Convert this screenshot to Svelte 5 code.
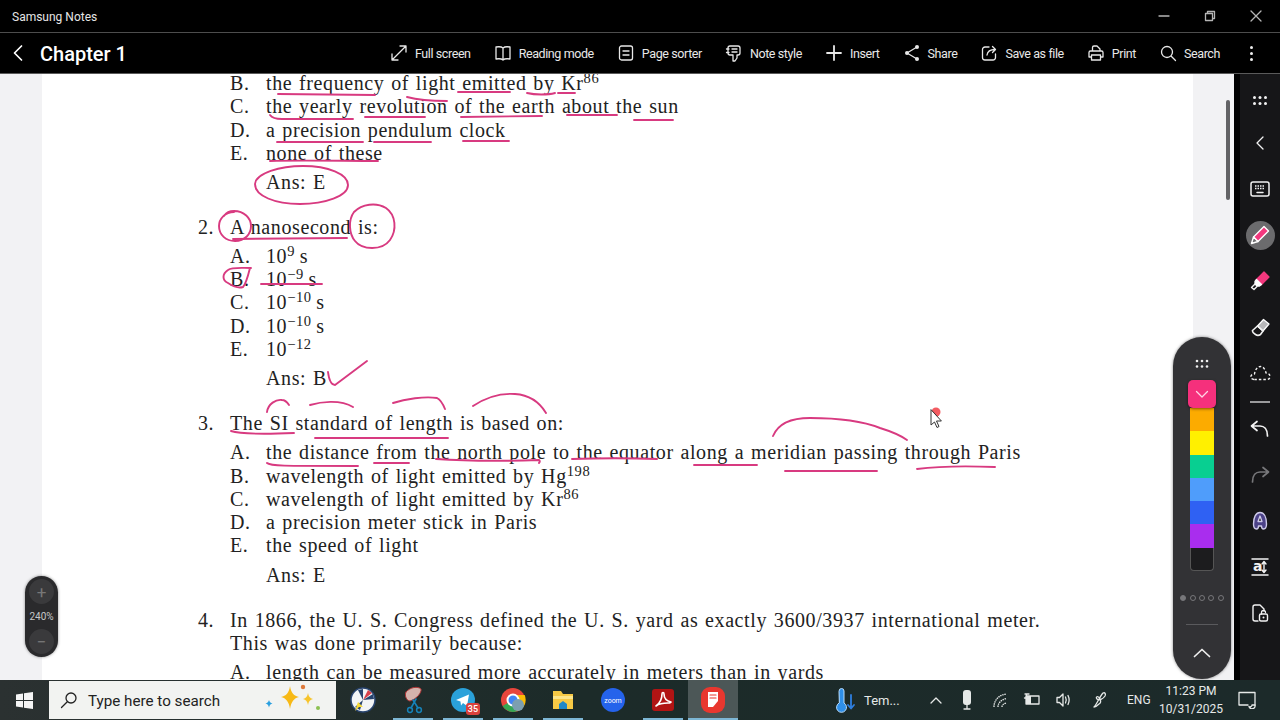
<script>
  const tools = [
    { label: 'Full screen', d: 'M2 16 9 9M2 16v-6M2 16h6M16 2 9 9M16 2v6M16 2h-6' },
    { label: 'Reading mode', d: 'M9 4C7.500 2.600 5 2.500 2 3v12c3-.5 5.500-.4 7 1 1.500-1.400 4-1.500 7-1V3c-3-.5-5.500-.4-7 1zM9 4v12' },
    { label: 'Page sorter', d: 'M4.500 2h9a2 2 0 0 1 2 2v10a2 2 0 0 1-2 2h-9a2 2 0 0 1-2-2V4a2 2 0 0 1 2-2zM6 7h6M6 11h6' },
    { label: 'Note style', d: 'M5 2h8a2 2 0 0 1 2 2v5a2 2 0 0 1-2 2h-1v3l-2 3H8v-6H5M5 2a2 2 0 0 0-2 2v5a2 2 0 0 0 2 2M1.500 5H4M1.500 8.500H4M7 5h5M7 8h5' },
    { label: 'Insert', d: 'M9 2v14M2 9h14', heavy: true },
    { label: 'Share', d: 'M14 3 4 9l10 6', dots: true },
    { label: 'Save as file', d: 'M9 3H5a2.500 2.500 0 0 0-2.500 2.500v8A2.500 2.500 0 0 0 5 16h8a2.500 2.500 0 0 0 2.500-2.500V10M7 11c.5-3.500 3-5.500 8-5.500M12.500 2.500l3 3-3 3' },
    { label: 'Print', d: 'M5.500 7V3.500A1.500 1.500 0 0 1 7 2h3l3 3v2M3.500 7h11A1.500 1.500 0 0 1 16 8.500V13h-2.500M4.500 13H2V8.500A1.500 1.500 0 0 1 3.500 7M4.500 11h9v5h-9z' },
    { label: 'Search', d: 'M8 2.500a5.500 5.500 0 1 0 0 11 5.500 5.500 0 0 0 0-11zM12 12l4.500 4.500' }
  ];

  const swatches = ['#fcab00', '#fff000', '#08cf91', '#4f9dfb', '#2f61f3', '#a92dee'];

  const questions = [
    {
      options: [
        { k: 'B.', t: 'the frequency of light emitted by Kr', sup: '86' },
        { k: 'C.', t: 'the yearly revolution of the earth about the sun' },
        { k: 'D.', t: 'a precision pendulum clock' },
        { k: 'E.', t: 'none of these' }
      ],
      ans: 'Ans: E'
    },
    {
      n: '2.',
      lines: ['A nanosecond is:'],
      options: [
        { k: 'A.', t: '10', sup: '9', after: '\u2009s' },
        { k: 'B.', t: '10', sup: '−9', after: '\u2009s' },
        { k: 'C.', t: '10', sup: '−10', after: '\u2009s' },
        { k: 'D.', t: '10', sup: '−10', after: '\u2009s' },
        { k: 'E.', t: '10', sup: '−12' }
      ],
      ans: 'Ans: B'
    },
    {
      n: '3.',
      lines: ['The SI standard of length is based on:'],
      options: [
        { k: 'A.', t: 'the distance from the north pole to the equator along a meridian passing through Paris' },
        { k: 'B.', t: 'wavelength of light emitted by Hg', sup: '198' },
        { k: 'C.', t: 'wavelength of light emitted by Kr', sup: '86' },
        { k: 'D.', t: 'a precision meter stick in Paris' },
        { k: 'E.', t: 'the speed of light' }
      ],
      ans: 'Ans: E'
    },
    {
      n: '4.',
      lines: [
        'In 1866, the U. S. Congress defined the U. S. yard as exactly 3600/3937 international meter.',
        'This was done primarily because:'
      ],
      options: [{ k: 'A.', t: 'length can be measured more accurately in meters than in yards' }]
    }
  ];

  const ink = [
    'M278 94L375 95', 'M407 97C418 100 430 101 447 101', 'M458 92L510 92', 'M527 93C535 95 548 95 555 93', 'M558 93L575 93',
    'M270 115C272 118 275 119 282 119L353 119', 'M365 117L425 117', 'M461 117L542 116', 'M567 115L617 115', 'M634 120L673 120',
    'M277 142L363 142', 'M374 142L431 142', 'M463 141L509 141', 'M270 161C300 160 345 161 378 161',
    'M255 184C256 173 280 166 303 166C328 166 348 174 348 185C348 196 325 204 300 204C275 204 255 196 255 184Z',
    'M234 212C225 212 219 219 219 226C219 235 226 241 235 241C245 241 251 234 251 226C251 218 244 211 234 211C229 211 226 213 224 216',
    'M233 239L347 238',
    'M354 212C348 220 349 234 355 241C362 250 382 251 390 240C397 230 396 215 386 208C376 202 362 204 354 212Z',
    'M251 268C240 268 232 267 228 270C222 274 222 280 228 283C234 287 240 288 243 287C246 284 248 276 250 268',
    'M261 284L322 284', 'M328 372C329 380 331 385 335 385L367 361',
    'M267 412C268 404 276 399 282 400C285 400 287 402 289 405', 'M310 405C320 402 340 399 353 407',
    'M393 403C405 399 425 396 437 398C441 400 443 404 445 409', 'M473 406C485 398 500 393 515 394C530 395 540 403 546 413',
    'M231 431C240 434 270 434 294 433', 'M315 438L448 438',
    'M773 436C778 424 790 418 810 418C840 418 865 422 880 428C893 432 900 435 907 440',
    'M267 463C270 466 280 466 358 466', 'M374 463L409 463', 'M436 459C465 461 510 461 539 460C540 461 540 462 539 463', 'M572 459C600 458 630 458 657 459',
    'M694 465L757 465', 'M785 471L877 471', 'M917 469C940 466 970 466 995 467'
  ];
</script>

<div class="screen">
  <div class="titlebar">
    <span class="app-name">Samsung Notes</span>
    <div class="win-btns">
      <svg width="12" height="12" viewBox="0 0 12 12"><path d="M1 6h10" /></svg>
      <svg width="12" height="12" viewBox="0 0 12 12"><path d="M1.500 3.500h7v7h-7zM3.500 3.500v-2h7v7h-2" /></svg>
      <svg width="12" height="12" viewBox="0 0 12 12"><path d="M1 1l10 10M11 1L1 11" /></svg>
    </div>
  </div>

  <header class="toolbar">
    <svg class="back" width="12" height="18" viewBox="0 0 12 18"><path d="M9.500 2 2.500 9l7 7" /></svg>
    <h1>Chapter 1</h1>
    <nav>
      {#each tools as tool}
        <div class="tool-item">
          <svg width="18" height="18" viewBox="0 0 18 18" class:heavy={tool.heavy}>
            <path d={tool.d} />
            {#if tool.dots}
              <circle class="solid" cx="14" cy="3" r="2" /><circle class="solid" cx="4" cy="9" r="2" /><circle class="solid" cx="14" cy="15" r="2" />
            {/if}
          </svg>
          <span>{tool.label}</span>
        </div>
      {/each}
      <div class="more"><i></i><i></i><i></i></div>
    </nav>
  </header>

  <main>
    <div class="gutter-left"></div>
    <div class="page">
      <div class="doc">
        {#each questions as q}
          <section>
            {#each q.lines ?? [] as line, i}
              <div class="q-line"><span class="num">{i === 0 ? q.n : ''}</span><span>{line}</span></div>
            {/each}
            <div class="opts" class:spaced={q.lines}>
              {#each q.options as o}
                <div class="opt"><span class="key">{o.k}</span><span>{o.t}{#if o.sup}<sup>{o.sup}</sup>{/if}{o.after ?? ''}</span></div>
              {/each}
            </div>
            {#if q.ans}<div class="ans">{q.ans}</div>{/if}
          </section>
        {/each}
      </div>
    </div>
    <div class="gutter-right"><div class="scrollbar"></div></div>

    <aside class="side">
      <div class="tool first"><svg width="16" height="12" viewBox="0 0 16 12"><g class="solid"><circle cx="2.500" cy="2.500" r="1.500" /><circle cx="8" cy="2.500" r="1.500" /><circle cx="13.500" cy="2.500" r="1.500" /><circle cx="2.500" cy="8.500" r="1.500" /><circle cx="8" cy="8.500" r="1.500" /><circle cx="13.500" cy="8.500" r="1.500" /></g></svg></div>
      <div class="tool"><svg width="10" height="14" viewBox="0 0 10 14"><path d="M8 1 2 7l6 6" /></svg></div>
      <div class="tool"><svg width="20" height="18" viewBox="0 0 20 18"><rect x="1" y="2" width="18" height="14" rx="2" stroke-width="1.500" /><path d="M5 6h10M5 8.500h10" stroke-dasharray="1.500 1" stroke-linecap="butt" stroke-width="1.500" /><path d="M7 12.500h6" stroke-width="1.500" /></svg></div>
      <div class="tool"><span class="pen-active"><svg width="22" height="22" viewBox="0 0 22 22"><path d="M15 2.500l4.500 4.500L9 17.500 4.500 13z" fill="#f3387e" stroke="#fff" stroke-width="1.400" /><path d="M4.500 13 2.500 19.500 9 17.500z" fill="#6b6b6d" stroke="#fff" stroke-width="1.400" /></svg></span></div>
      <div class="tool"><svg width="22" height="22" viewBox="0 0 22 22"><path d="M15 2l5 5-7.500 7.500-5-5z" fill="#f3387e" stroke="#f3387e" /><path d="M7.500 9.500l5 5-2 1.500H8l-2-2v-2.500z" fill="#fff" stroke="#fff" /><path d="M6 14l-3.500 3.500 2.500 2 3-3" stroke-width="1.400" /></svg></div>
      <div class="tool"><svg width="22" height="20" viewBox="0 0 22 20"><path d="M14.500 2.500 20 7l-6 7-5.500-5z" fill="#b8b8ba" stroke="#fff" stroke-width="1.300" /><path d="M8.500 9 14 14l-2.500 3.500c-1.500 1-3.500 1-5 0S3 15 3.500 13.500z" stroke-width="1.600" /></svg></div>
      <div class="tool"><svg width="22" height="18" viewBox="0 0 22 18"><path d="M5 15.500C2.500 15.500 1.500 13.500 2 12c.5-1.500 2-2 3.500-2C6 6 8.500 2.500 11.500 2.500S16.500 6 17 9c2.500 0 4 1.500 4 3.500s-1.500 3-3 3z" stroke-dasharray="2.500 2" stroke-linecap="butt" stroke-width="1.400" /></svg></div>
      <div class="sep"></div>
      <div class="tool"><svg width="20" height="18" viewBox="0 0 20 18"><path d="M7 1.500 1.500 6 7 10.500M2 6h8c4 0 7.500 3 7.500 10" stroke-width="1.700" /></svg></div>
      <div class="tool dim"><svg width="20" height="18" viewBox="0 0 20 18"><path d="M13 1.500 18.500 6 13 10.500M18 6h-8c-4 0-7.500 3-7.500 10" stroke-width="1.700" /></svg></div>
      <div class="tool"><svg width="18" height="20" viewBox="0 0 18 20"><path d="M2.500 13C2.500 6 5 1.500 9 1.500S15.500 6 15.500 13c0 3-1 5-3 5-1.500 0-2-1.500-2-3h-3c0 1.500-.5 3-2 3-2 0-3-2-3-5z" fill="#4c4288" stroke="#cfcbea" stroke-width="1.400" /><path d="M7 10.500 9 5l2 5.500z" fill="#161618" stroke="#cfcbea" /></svg></div>
      <div class="tool"><svg width="18" height="20" viewBox="0 0 18 20"><path d="M1 2h16M1 18h16" stroke-width="1.500" /><path d="M13 5v10M11 7l2-2.500L15 7M11 13l2 2.500 2-2.500" stroke-width="1.400" /></svg><span class="glyph-a">a</span></div>
      <div class="tool"><svg width="18" height="20" viewBox="0 0 18 20"><path d="M7 18H4a2 2 0 0 1-2-2V4a2 2 0 0 1 2-2h5l4 4v2" stroke-width="1.400" /><rect x="8.500" y="11" width="8" height="7" rx="1.500" stroke-width="1.400" /><path d="M10.500 11V9.500a2 2 0 0 1 4 0" stroke-width="1.300" /><circle class="solid" cx="12.500" cy="14.500" r="1" /></svg></div>
    </aside>

    <svg class="ink" viewBox="0 74 1280 606" width="1280" height="606">
      {#each ink as d}<path {d} />{/each}
    </svg>

    <div class="cursor">
      <svg width="18" height="24" viewBox="0 0 18 24"><circle cx="10" cy="6" r="4.500" fill="#f0323a" stroke="none" opacity="0.8" /><path d="M5 4v15l3.500-3 2.500 5.500 2-1-2.500-5.500H15z" fill="#fff" stroke="#333" stroke-width="1" /></svg>
    </div>

    <div class="zoom-pill">
      <button aria-label="Zoom in">+</button>
      <span>240%</span>
      <button aria-label="Zoom out">−</button>
    </div>

    <div class="pen-panel">
      <svg class="grip" width="16" height="10" viewBox="0 0 16 10"><g class="solid"><circle cx="3" cy="2" r="1.300" /><circle cx="8" cy="2" r="1.300" /><circle cx="13" cy="2" r="1.300" /><circle cx="3" cy="7.500" r="1.300" /><circle cx="8" cy="7.500" r="1.300" /><circle cx="13" cy="7.500" r="1.300" /></g></svg>
      <div class="swatch-list">
        <div class="picked"><svg width="14" height="10" viewBox="0 0 14 10"><path d="M1.500 2.500 7 8l5.500-5.500" /></svg></div>
        {#each swatches as c}
          <div class="swatch" style="background:{c}"></div>
        {/each}
        <div class="swatch last"></div>
      </div>
      <div class="thick">
        <i class="on"></i><i></i><i></i><i></i><i></i>
      </div>
      <div class="panel-line"></div>
      <svg class="up" width="18" height="10" viewBox="0 0 18 10"><path d="M1.500 8.500 9 1.500l7.500 7" /></svg>
    </div>
  </main>

  <footer class="taskbar">
    <div class="start">
      <svg width="17" height="17" viewBox="0 0 17 17"><path class="solid" d="M0 2.400 7 1.400V8H0zM8 1.300 17 0v8H8zM0 9h7v6.600L0 14.600zM8 9h9v8l-9-1.300z" /></svg>
    </div>
    <div class="searchbox">
      <svg width="18" height="18" viewBox="0 0 18 18"><path d="M11 2a5 5 0 1 0 0 10 5 5 0 0 0 0-10zM7.300 10.700 1.500 16.500" /></svg>
      <span>Type here to search</span>
      <svg class="sparkle" width="64" height="34" viewBox="0 0 64 34">
        <path d="M30 3c1 7 4 10 9 11-5 1-8 5-9 12-1-7-4-11-9-12 5-1 8-4 9-11z" fill="#f7b916" />
        <path d="M48 10c.5 3.500 2 5 5 6-3 1-4.500 2.500-5 6-.5-3.500-2-5-5-6 3-1 4.500-2.500 5-6z" fill="#f7c42c" />
        <path d="M9 17c.5 2 1.500 3 3.500 3.500-2 .5-3 1.500-3.500 4-.5-2.500-1.500-3.500-3.500-4 2-.5 3-1.500 3.500-3.500z" fill="#2a9fdf" />
        <circle cx="43" cy="4" r="2.200" fill="#dd7a3c" /><circle cx="58" cy="25" r="2" fill="#8cc152" />
      </svg>
    </div>
    <div class="apps">
      <div class="app"><svg width="26" height="26" viewBox="0 0 26 26"><circle cx="13" cy="13" r="12" fill="#f2f4f6" stroke="#28446f" stroke-width="1.500" /><path d="M13 13 8 3l5-1z" fill="#28446f" /><path d="M13 13l10-6 1 5z" fill="#28446f" /><path d="M13 13l9-7-4-3z" fill="#d8404a" /><path d="M13 13l-3 10-5-3z" fill="#28446f" /><path d="M5 24l3-9 5 5-4 0z" fill="#f6d835" /></svg></div>
      <div class="app run"><svg width="26" height="28" viewBox="0 0 26 28"><path d="M6 6c4-5 12-6 15-3 1 3-4 10-11 12-3 0-6-5-4-9z" fill="#d5b3ad" stroke="#a33" stroke-width="1" /><path d="M13 14l5 8M16 13l-5 9" stroke="#1682b8" stroke-width="1.600" /><circle cx="19" cy="24" r="2.400" stroke="#1682b8" stroke-width="1.500" /><circle cx="10" cy="24" r="2.400" stroke="#1682b8" stroke-width="1.500" /></svg></div>
      <div class="app run"><svg width="24" height="24" viewBox="0 0 24 24"><circle cx="12" cy="12" r="12" fill="#2aa1da" /><path d="M5 12 18 6.500 16 18l-4-3-2 2.500-.5-4z" fill="#fff" /></svg><b class="badge">35</b></div>
      <div class="app run"><svg width="26" height="26" viewBox="0 0 26 26"><circle cx="13" cy="13" r="12" fill="#e8453c" /><path d="M13 13 2.600 19A12 12 0 0 0 17 24.300z" fill="#34a853" /><path d="M13 13l4 11.300A12 12 0 0 0 24.700 8H13z" fill="#fbbc05" /><circle cx="13" cy="13" r="5.500" fill="#4285f4" stroke="#fff" stroke-width="2" /><circle cx="18" cy="18" r="6" fill="#7c9fb0" /></svg></div>
      <div class="app run"><svg width="24" height="22" viewBox="0 0 24 22"><path d="M2 2h8l2 3h10v15H2z" fill="#f6c945" /><path d="M2 7h20v3H2z" fill="#fde58a" /><path d="M8 20v-5l4-3 4 3v5z" fill="#1f88c9" /></svg></div>
      <div class="app"><svg width="24" height="24" viewBox="0 0 24 24"><circle cx="12" cy="12" r="12" fill="#2563eb" /><text x="12" y="14.500" text-anchor="middle" fill="#fff" class="zoom-word">zoom</text></svg></div>
      <div class="app run"><svg width="24" height="24" viewBox="0 0 24 24"><rect x="1" y="1" width="22" height="22" rx="3" fill="#b11414" /><path d="M5 18c4-3 6-8 6-12 0-2 2-2 2 0 0 5 3 7 7 8 0 1-1 1-3 1-3 0-8 0-12 3z" stroke="#fff" stroke-width="1.600" /></svg></div>
      <div class="app run current"><svg width="26" height="28" viewBox="0 0 26 28"><rect x="1" y="1" width="24" height="26" rx="9" fill="#e8372f" /><path d="M8 6h10v9l-5 6H8z" fill="#fff" /><path d="M10 9h6M10 12h6" stroke="#e8372f" stroke-width="1.200" /></svg></div>
    </div>

    <div class="tray">
      <svg class="thermo" width="22" height="26" viewBox="0 0 22 26"><path d="M4 4a2.500 2.500 0 0 1 5 0v12a5 5 0 1 1-5 0z" fill="#2f8fe8" stroke="#b9dcfa" stroke-width="1" /><path d="M16 8v13M13 18l3 3.500 3-3.500" stroke="#2f7fe0" stroke-width="1.800" /></svg>
      <span class="temp">Tem...</span>
      <svg class="t-chev" width="12" height="8" viewBox="0 0 12 8"><path d="M1 7l5-5 5 5" /></svg>
      <svg class="t-mic" width="10" height="20" viewBox="0 0 10 20"><rect class="solid" x="1" y="0" width="8" height="15" rx="3" /><path d="M5 15v4M2 19h6" /></svg>
      <svg class="t-wifi" width="16" height="16" viewBox="0 0 16 16"><path d="M2 15C2 8 7 3 14 2M6 15c0-4 3-7 8-8.500M10 15c0-2 1.500-3 4-4" stroke-dasharray="1.500 .7" stroke-linecap="butt" /></svg>
      <svg class="t-batt" width="18" height="14" viewBox="0 0 18 14"><rect x="3" y="3" width="13" height="8" /><rect class="solid" x="3" y="3" width="5" height="8" /><path d="M2 1h4M3.500 1v4M1.500 5h4" /></svg>
      <svg class="t-vol" width="16" height="16" viewBox="0 0 16 16"><path d="M1 5.500h2.500L7 2v12L3.500 10.500H1zM9.500 5c1 2 1 4 0 6M12 3.500c1.500 3 1.500 6 0 9" /></svg>
      <svg class="t-pen" width="16" height="18" viewBox="0 0 16 18"><path d="M2 16C5 13 8 5 11 2c2-1 3 1 2 3-2 3-6 5-8 3s1-4 3 0c1 2 1 4-1 5-1 1-3 3-5 3z" /></svg>
      <span class="lang">ENG</span>
      <div class="clock"><span>11:23 PM</span><span>10/31/2025</span></div>
      <svg class="t-note" width="18" height="18" viewBox="0 0 18 18"><path d="M1 1.500h16v12.500M1 1.500V14h9" /><path d="M17 14a3 3 0 1 1-6 1.500c1 1 3 0 3-1.500z" /></svg>
    </div>
  </footer>
</div>

<style>
  :global(body) {
    margin: 0;
    background: #000;
  }

  svg {
    fill: none;
    stroke: currentColor;
    stroke-width: 1.3;
    stroke-linecap: round;
    stroke-linejoin: round;
  }

  .solid {
    fill: currentColor;
    stroke: none;
  }

  .screen {
    width: 1280px;
    height: 720px;
    display: flex;
    flex-direction: column;
    overflow: hidden;
    font-family: Roboto, "Noto Sans", sans-serif;
    color: #fff;
  }

  .titlebar {
    height: 32px;
    flex: none;
    display: flex;
    align-items: center;
    justify-content: space-between;
    padding-left: 12px;
    background: #000;
    border-bottom: 1px solid #4d4d4d;
  }

  .app-name {
    font-size: 12px;
    color: #e6e6e6;
    margin-top: 1px;
  }

  .win-btns {
    display: flex;
    gap: 34px;
    padding-right: 18px;
    color: #b5b5b5;
  }

  .toolbar {
    height: 40px;
    flex: none;
    display: flex;
    align-items: center;
    background: #000;
    border-bottom: 1px solid #5a5a5a;
  }

  .back {
    margin-left: 12px;
    stroke-width: 1.7;
  }

  h1 {
    margin: 2px 0 0 16px;
    font-size: 20px;
    font-weight: 500;
    color: #fff;
  }

  nav {
    margin-left: auto;
    display: flex;
    align-items: center;
    gap: 23px;
    padding-right: 27px;
  }

  .tool-item {
    display: flex;
    align-items: center;
    gap: 7px;
    font-size: 12.5px;
    letter-spacing: -0.4px;
    color: #e8e8e8;
  }

  .heavy {
    stroke-width: 1.8;
  }

  .more {
    display: flex;
    flex-direction: column;
    gap: 3px;
    margin-left: 7px;
  }

  .more i {
    width: 3px;
    height: 3px;
    border-radius: 50%;
    background: #eee;
  }

  main {
    position: relative;
    flex: 1;
    display: flex;
    min-height: 0;
    background: #f2f2f4;
  }

  .gutter-left {
    width: 42px;
    flex: none;
  }

  .page {
    flex: 1;
    background: #fff;
    overflow: hidden;
  }

  .doc {
    margin-top: -2px;
    padding-left: 156px;
    font-family: "Liberation Serif", serif;
    font-size: 20px;
    letter-spacing: 0.6px;
    word-spacing: 1.2px;
    line-height: 23.3px;
    color: #222;
    white-space: nowrap;
  }

  section {
    margin-bottom: 22px;
  }

  section:first-child {
    margin-bottom: 21.4px;
  }

  .q-line {
    display: flex;
  }

  .num {
    width: 32px;
    flex: none;
  }

  .opts {
    margin-left: 32px;
  }

  .opts.spaced {
    margin-top: 5.5px;
  }

  .opt {
    display: flex;
  }

  .key {
    width: 36px;
    flex: none;
  }

  sup {
    font-size: 14.5px;
    line-height: 0;
    vertical-align: 7px;
  }

  .ans {
    margin: 6px 0 0 68px;
  }

  .gutter-right {
    width: 41px;
    flex: none;
  }

  .scrollbar {
    width: 4px;
    height: 100px;
    margin: 26px 0 0 33px;
    border-radius: 2px;
    background: #636366;
  }

  .side {
    width: 40px;
    flex: none;
    display: flex;
    flex-direction: column;
    align-items: center;
    padding-top: 7px;
    background: #161618;
    border-left: 6px solid #000;
    color: #f2f2f2;
  }

  .tool {
    height: 46px;
    flex: none;
    display: flex;
    align-items: center;
    justify-content: center;
    position: relative;
  }

  .tool.first {
    height: 39px;
  }

  .tool.dim {
    color: #77777a;
  }

  .pen-active {
    width: 29px;
    height: 29px;
    display: flex;
    align-items: center;
    justify-content: center;
    border-radius: 50%;
    background: #6b6b6d;
  }

  .glyph-a {
    position: absolute;
    left: 2px;
    top: 13px;
    font-family: "DejaVu Sans", sans-serif;
    font-size: 14px;
    line-height: 18px;
    font-weight: 600;
  }

  .sep {
    width: 20px;
    height: 2px;
    flex: none;
    margin: 5px 0 3px;
    background: #9a9a9c;
  }

  .ink {
    position: absolute;
    left: 0;
    top: 0;
    pointer-events: none;
    stroke: #d83a80;
    stroke-width: 1.9;
  }

  .cursor {
    position: absolute;
    left: 926px;
    top: 332px;
    line-height: 0;
  }

  .zoom-pill {
    position: absolute;
    left: 25px;
    top: 502px;
    width: 33px;
    height: 81px;
    display: flex;
    flex-direction: column;
    align-items: center;
    justify-content: space-between;
    padding: 3px 0;
    box-sizing: border-box;
    border-radius: 17px;
    background: #2a2a2c;
    box-shadow: 0 0 3px rgba(0, 0, 0, 0.45);
    color: #c8c8c8;
    font-size: 10px;
  }

  .zoom-pill button {
    width: 25px;
    height: 25px;
    padding: 0;
    border: 0;
    border-radius: 50%;
    background: #3a3a3c;
    color: #777;
    font-size: 17px;
    line-height: 22px;
    font-family: Roboto, sans-serif;
  }

  .pen-panel {
    position: absolute;
    left: 1173px;
    top: 263px;
    width: 58px;
    height: 342px;
    display: flex;
    flex-direction: column;
    align-items: center;
    border-radius: 29px;
    background: #323235;
    box-shadow: 0 0 3px rgba(0, 0, 0, 0.5);
    color: #eee;
  }

  .grip {
    margin-top: 22px;
  }

  .swatch-list {
    margin-top: 11px;
    display: flex;
    flex-direction: column;
    align-items: center;
  }

  .picked {
    width: 28px;
    height: 28px;
    display: flex;
    align-items: center;
    justify-content: center;
    border-radius: 5px;
    background: #f5307c;
    box-shadow: 0 1px 3px rgba(0, 0, 0, 0.5);
    color: #ffd5e5;
    position: relative;
  }

  .swatch {
    width: 24px;
    height: 23.3px;
  }

  .swatch.last {
    box-sizing: border-box;
    background: #1c1c1e;
    border: 1px solid #555;
    border-top: 0;
    border-radius: 0 0 4px 4px;
  }

  .thick {
    margin-top: 24px;
    display: flex;
    gap: 3.3px;
    align-items: center;
  }

  .thick i {
    width: 4px;
    height: 4px;
    border: 1px solid #77777a;
    border-radius: 50%;
  }

  .thick i.on {
    background: #77777a;
  }

  .panel-line {
    width: 32px;
    height: 1px;
    margin-top: 23px;
    background: #5a5a5d;
  }

  .up {
    margin-top: 23px;
    stroke-width: 1.7;
  }

  .taskbar {
    height: 40px;
    flex: none;
    display: flex;
    align-items: center;
    background: linear-gradient(90deg, #2b3131, #1c2b29 45%, #1c2a2a);
  }

  .start {
    width: 49px;
    flex: none;
    display: flex;
    justify-content: center;
    color: #f5f5f5;
  }

  .searchbox {
    width: 287px;
    height: 38px;
    flex: none;
    box-sizing: border-box;
    display: flex;
    align-items: center;
    padding-left: 11px;
    background: #f2f3f1;
    color: #222;
    font-size: 15.2px;
  }

  .searchbox span {
    margin: 1px 0 0 10px;
  }

  .sparkle {
    margin-left: auto;
    margin-right: 12px;
    stroke: none;
  }

  .apps {
    display: flex;
    height: 40px;
    margin-left: 2px;
  }

  .app {
    width: 50px;
    height: 40px;
    flex: none;
    position: relative;
    display: flex;
    align-items: center;
    justify-content: center;
  }

  .app svg {
    stroke: none;
  }

  .app.run::after {
    content: "";
    position: absolute;
    left: 5px;
    right: 5px;
    bottom: 0;
    height: 2px;
    background: #7db6d4;
  }

  .app.current {
    background: #4c5757;
  }

  .app.current::after {
    left: 0;
    right: 0;
  }

  .zoom-word {
    font-size: 7px;
    font-family: Roboto, sans-serif;
  }

  .badge {
    position: absolute;
    right: 8px;
    bottom: 5px;
    padding: 0 2px;
    border-radius: 3px;
    background: #d9413c;
    color: #fff;
    font-size: 9px;
    line-height: 12px;
    font-weight: 500;
  }

  .tray {
    display: flex;
    align-items: center;
    height: 40px;
    margin-left: auto;
    color: #e6e9e8;
  }

  .tray > svg {
    flex: none;
  }

  .temp {
    margin-left: 7px;
    font-size: 13px;
    width: 36px;
  }

  .t-chev { margin-left: 30px; }
  .t-mic { margin-left: 20px; }
  .t-wifi { margin-left: 20px; }
  .t-batt { margin-left: 15px; }
  .t-vol { margin-left: 15px; }
  .t-pen { margin-left: 20px; }

  .lang {
    margin-left: 19px;
    font-size: 12px;
    width: 22px;
  }

  .clock {
    width: 66px;
    margin-left: 9px;
    display: flex;
    flex-direction: column;
    align-items: center;
    gap: 3px;
    font-size: 12px;
    line-height: 15px;
  }

  .t-note {
    margin: 0 24px 0 14px;
  }
</style>
